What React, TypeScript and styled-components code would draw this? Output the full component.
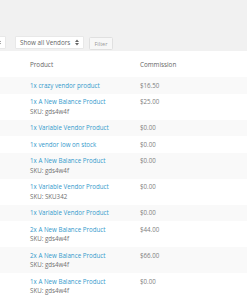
import React from 'react';
import styled, { createGlobalStyle } from 'styled-components';

interface IRow {
  readonly qty: number;
  readonly name: string;
  readonly sku?: string;
  readonly commission: string;
}

const rows: IRow[] = [
  { qty: 1, name: 'crazy vendor product', commission: '$16.50' },
  { qty: 1, name: 'A New Balance Product', sku: 'gds4w4f', commission: '$25.00' },
  { qty: 1, name: 'Variable Vendor Product', commission: '$0.00' },
  { qty: 1, name: 'vendor low on stock', commission: '$0.00' },
  { qty: 1, name: 'A New Balance Product', sku: 'gds4w4f', commission: '$0.00' },
  { qty: 1, name: 'Variable Vendor Product', sku: 'SKU342', commission: '$0.00' },
  { qty: 1, name: 'Variable Vendor Product', commission: '$0.00' },
  { qty: 2, name: 'A New Balance Product', sku: 'gds4w4f', commission: '$44.00' },
  { qty: 2, name: 'A New Balance Product', sku: 'gds4w4f', commission: '$66.00' },
  { qty: 1, name: 'A New Balance Product', sku: 'gds4w4f', commission: '$0.00' },
];

const SelectArrows = () => (
  <svg width="4" height="7" viewBox="0 0 4 7">
    <path d="M0 3 L2 0.5 L4 3 Z M0 4 L2 6.5 L4 4 Z" fill="#666" />
  </svg>
);

const App = () => (
  <>
    <GlobalStyle />
    <Page>
      <Toolbar>
        <Select $width={40} $offset={-34} aria-label="Show all dates">
          <span />
          <SelectArrows />
        </Select>
        <Select $width={69}>
          <span>Show all Vendors</span>
          <SelectArrows />
        </Select>
        <FilterButton type="button">Filter</FilterButton>
      </Toolbar>
      <Table>
        <HeadRow>
          <HeadCell>Product</HeadCell>
          <HeadCell>Commission</HeadCell>
        </HeadRow>
        { rows.map((row, index) => (
          <Row key={index} $striped={index % 2 === 0}>
            <Cell>
              <ProductLink>{ `${row.qty}x ${row.name}` }</ProductLink>
              { row.sku && <Sku>{ `SKU: ${row.sku}` }</Sku> }
            </Cell>
            <Cell>
              <Amount>{ row.commission }</Amount>
            </Cell>
          </Row>
        )) }
      </Table>
    </Page>
  </>
);

export default App;

const GlobalStyle = createGlobalStyle`
  html, body {
    margin: 0;
    padding: 0;
    background: #f1f1f1;
    font-family: "Open Sans", "Liberation Sans", sans-serif;
    overflow: hidden;
  }
`;

const Page = styled.div`
  width: 247px;
  height: 296px;
  padding-top: 36px;
  box-sizing: border-box;
  overflow: hidden;
`;

const Toolbar = styled.div`
  display: flex;
  align-items: flex-start;
  gap: 9px;
  height: 15px;
`;

const Select = styled.div<{ $width: number; $offset?: number }>`
  display: flex;
  align-items: center;
  justify-content: space-between;
  box-sizing: border-box;
  width: ${(p) => p.$width}px;
  height: 13px;
  margin-left: ${(p) => p.$offset ?? 0}px;
  padding: 0 4px;
  background: #fff;
  border: 1px solid #e8e8e8;
  border-radius: 1px;
  font-size: 6.3px;
  color: #666;
  white-space: nowrap;
`;

const FilterButton = styled.button`
  box-sizing: border-box;
  width: 24px;
  height: 13px;
  margin: 1px 0 0 -4px;
  padding: 0;
  background: #f7f7f7;
  border: 1px solid #e0e0e0;
  border-radius: 1.5px;
  font-family: inherit;
  font-size: 5.5px;
  color: #999;
`;

const Table = styled.div`
  display: flex;
  flex-direction: column;
`;

const HeadRow = styled.div`
  display: grid;
  grid-template-columns: 110px 1fr;
  height: 26px;
  align-items: center;
  padding-left: 30px;
  background: #fff;
`;

const HeadCell = styled.div`
  font-size: 6.3px;
  color: #666;
`;

const Row = styled.div<{ $striped: boolean }>`
  display: grid;
  grid-template-columns: 110px 1fr;
  padding: 3.5px 0 3.5px 30px;
  background: ${(p) => (p.$striped ? '#f9f9f9' : '#fff')};
`;

const Cell = styled.div`
  display: flex;
  flex-direction: column;
  font-size: 6.2px;
  line-height: 9.5px;
`;

const ProductLink = styled.a`
  color: #3399cc;
  text-decoration: none;
  white-space: nowrap;
`;

const Sku = styled.span`
  color: #707070;
`;

const Amount = styled.span`
  color: #808080;
`;
